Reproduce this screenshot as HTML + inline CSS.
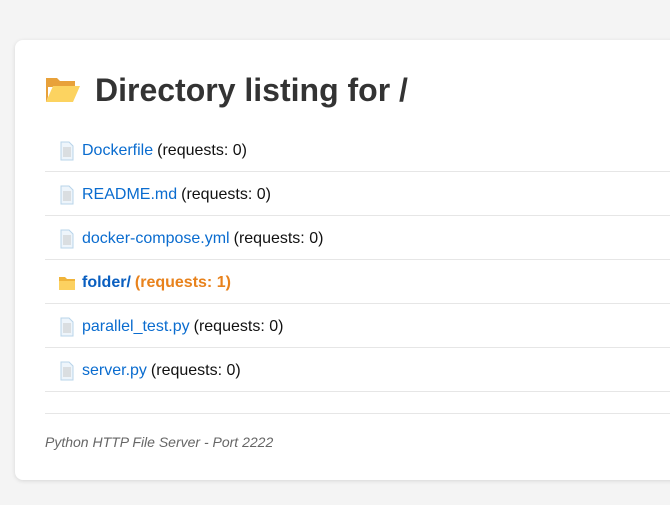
<!DOCTYPE html>
<html><head><meta charset="utf-8"><style>
body{margin:0;background:#f4f4f4;font-family:"Liberation Sans",Arial,sans-serif;width:670px;height:505px;overflow:hidden;position:relative}
.card{position:absolute;left:15px;top:40px;width:700px;height:440px;background:#fff;border-radius:8px;box-shadow:0 1px 4px rgba(0,0,0,.12)}
h1{position:absolute;left:30px;top:70px;margin:0;font-size:32px;font-weight:bold;color:#333;line-height:40px;display:flex;align-items:center}
h1 svg{margin-right:14px}
ul{position:absolute;left:45px;top:128px;margin:0;padding:0;list-style:none;width:640px}
li{height:40px;padding-top:3px;border-bottom:1px solid #e6e6e6;display:flex;align-items:center;padding-left:13px;font-size:16px;color:#111}
li svg{margin-right:6px}
a{color:#0a6ccf;text-decoration:none;margin-right:4px}
.f a{font-weight:bold;color:#0a5fc0}.f span{font-weight:bold;color:#e8821c}
.hr{position:absolute;left:45px;top:413px;width:640px;border-top:1px solid #e6e6e6}
.foot{position:absolute;left:45px;top:434px;font-size:14px;font-style:italic;color:#666}
</style></head><body>
<div class="card"></div>
<h1 style="left:45px"><svg width="36" height="32" viewBox="0 0 36 32"><path d="M1 4h11l3 3h15v6H1z" fill="#e8a13a"/><path d="M1 28L8 12h27l-7 16z" fill="#fcd360"/><path d="M1 4v24l2-5V6z" fill="#e8a13a"/></svg>Directory listing for /</h1>
<ul>
<li><svg width="18" height="20" viewBox="0 0 18 20"><path d="M3 1h8l4 4v14H3z" fill="#eef5fb" stroke="#b8d4ea"/><path d="M5 7h8M5 9h8M5 11h8M5 13h8M5 15h8" stroke="#c7c7c7"/></svg><a>Dockerfile</a>(requests: 0)</li>
<li><svg width="18" height="20" viewBox="0 0 18 20"><path d="M3 1h8l4 4v14H3z" fill="#eef5fb" stroke="#b8d4ea"/><path d="M5 7h8M5 9h8M5 11h8M5 13h8M5 15h8" stroke="#c7c7c7"/></svg><a>README.md</a>(requests: 0)</li>
<li><svg width="18" height="20" viewBox="0 0 18 20"><path d="M3 1h8l4 4v14H3z" fill="#eef5fb" stroke="#b8d4ea"/><path d="M5 7h8M5 9h8M5 11h8M5 13h8M5 15h8" stroke="#c7c7c7"/></svg><a>docker-compose.yml</a>(requests: 0)</li>
<li class="f"><svg width="18" height="18" viewBox="0 0 18 18"><path d="M1 3h6l2 2h8v11H1z" fill="#f0b43a"/><path d="M1 7h16v9H1z" fill="#fcd160"/></svg><a>folder/</a><span>(requests: 1)</span></li>
<li><svg width="18" height="20" viewBox="0 0 18 20"><path d="M3 1h8l4 4v14H3z" fill="#eef5fb" stroke="#b8d4ea"/><path d="M5 7h8M5 9h8M5 11h8M5 13h8M5 15h8" stroke="#c7c7c7"/></svg><a>parallel_test.py</a>(requests: 0)</li>
<li><svg width="18" height="20" viewBox="0 0 18 20"><path d="M3 1h8l4 4v14H3z" fill="#eef5fb" stroke="#b8d4ea"/><path d="M5 7h8M5 9h8M5 11h8M5 13h8M5 15h8" stroke="#c7c7c7"/></svg><a>server.py</a>(requests: 0)</li>
</ul>
<div class="hr"></div>
<div class="foot">Python HTTP File Server - Port 2222</div>
</body></html>
